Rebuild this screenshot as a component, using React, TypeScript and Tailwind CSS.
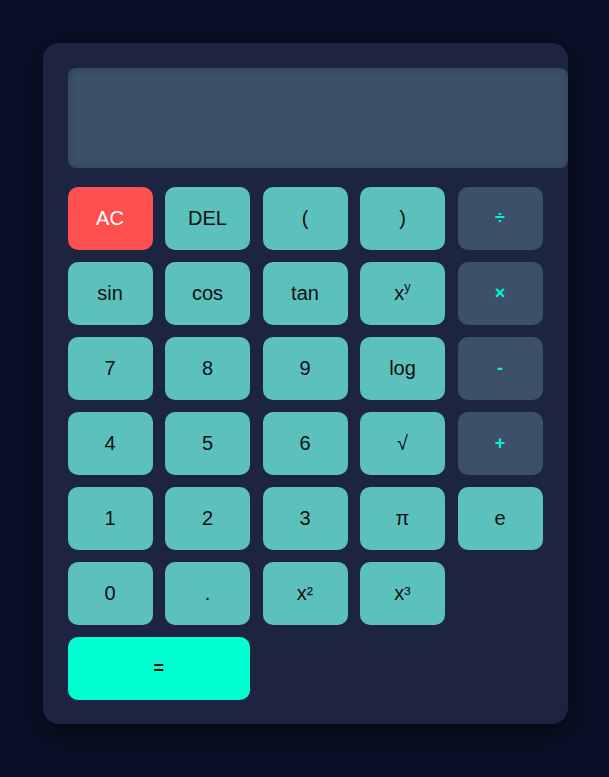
const keys: { label: React.ReactNode; kind: "num" | "op" | "clear" | "eq" }[] = [
  { label: "AC", kind: "clear" },
  { label: "DEL", kind: "num" },
  { label: "(", kind: "num" },
  { label: ")", kind: "num" },
  { label: "÷", kind: "op" },
  { label: "sin", kind: "num" },
  { label: "cos", kind: "num" },
  { label: "tan", kind: "num" },
  { label: <>x<sup className="text-[13px] -top-[0.45em]">y</sup></>, kind: "num" },
  { label: "×", kind: "op" },
  { label: "7", kind: "num" },
  { label: "8", kind: "num" },
  { label: "9", kind: "num" },
  { label: "log", kind: "num" },
  { label: "-", kind: "op" },
  { label: "4", kind: "num" },
  { label: "5", kind: "num" },
  { label: "6", kind: "num" },
  { label: "√", kind: "num" },
  { label: "+", kind: "op" },
  { label: "1", kind: "num" },
  { label: "2", kind: "num" },
  { label: "3", kind: "num" },
  { label: "π", kind: "num" },
  { label: "e", kind: "num" },
  { label: "0", kind: "num" },
  { label: ".", kind: "num" },
  { label: <>x<span className="text-[19px]">²</span></>, kind: "num" },
  { label: <>x<span className="text-[19px]">³</span></>, kind: "num" },
];

const styles = {
  num: "bg-[#5cc1bd] text-[#111] text-[20px]",
  op: "bg-[#3c5069] text-[#00f5cc] text-[18px] font-bold",
  clear: "bg-[#ff4f4f] text-white text-[20px]",
  eq: "bg-[#00ffd1] text-black text-[18px] font-bold col-span-2",
};

export default function App() {
  return (
    <div className="min-h-screen bg-[#0a1027] pt-[43px] pl-px flex justify-center font-['Liberation_Sans',Arial,sans-serif]">
      <div className="w-[525px] h-[681px] rounded-2xl bg-[#1d2442] p-[25px] shadow-[0_8px_32px_rgba(0,0,0,0.55)]">
        <div className="w-[500px] h-[100px] rounded-lg bg-[#3c5069] shadow-[inset_0_0_8px_rgba(0,0,0,0.2)]" />
        <div className="mt-[19px] w-[475px] grid grid-cols-5 gap-x-[12.5px] gap-y-3">
          {keys.map((k, i) => (
            <button
              key={i}
              className={`h-[63px] pb-px rounded-[10px] flex items-center justify-center leading-none ${styles[k.kind]}`}
            >
              {k.label}
            </button>
          ))}
          <button className={`h-[63px] pb-px rounded-[10px] flex items-center justify-center ${styles.eq}`}>=</button>
        </div>
      </div>
    </div>
  );
}
